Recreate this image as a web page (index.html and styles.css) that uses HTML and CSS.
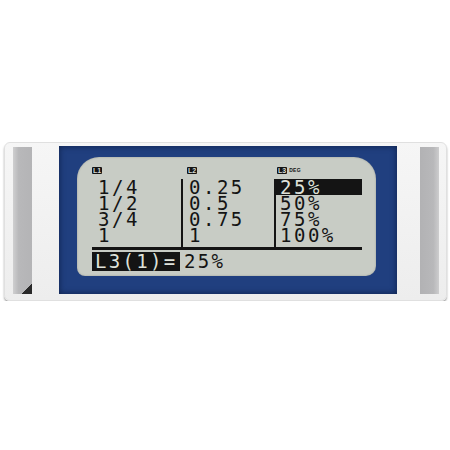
FILE: index.html
```html
<!DOCTYPE html>
<html>
<head>
<meta charset="utf-8">
<link rel="stylesheet" href="styles.css">
</head>
<body>
<div class="page">
  <div class="frame">
    <div class="bar bar-left"></div>
    <div class="panel">
      <div class="lcd">
        <div class="table">
          <div class="col c1">
            <div class="head"><span class="tag">L1</span></div>
            <div class="cells">
              <div class="cell">1/4</div>
              <div class="cell">1/2</div>
              <div class="cell">3/4</div>
              <div class="cell">1</div>
            </div>
          </div>
          <div class="col c2">
            <div class="head"><span class="tag">L2</span></div>
            <div class="cells">
              <div class="cell">0.25</div>
              <div class="cell">0.5</div>
              <div class="cell">0.75</div>
              <div class="cell">1</div>
            </div>
          </div>
          <div class="col c3">
            <div class="head"><span class="tag">L3</span><span class="deg">DEG</span></div>
            <div class="cells">
              <div class="cell sel">25%</div>
              <div class="cell">50%</div>
              <div class="cell">75%</div>
              <div class="cell">100%</div>
            </div>
          </div>
        </div>
        <div class="entry"><span class="prompt">L3(1)=</span><span class="value">25%</span></div>
      </div>
    </div>
    <div class="bar bar-right"></div>
  </div>
</div>
</body>
</html>
```

FILE: styles.css
```css
html, body {
  margin: 0;
  padding: 0;
  background: #ffffff;
}
.page {
  padding: 142px 3px 0 4px;
}
.frame {
  width: 443px;
  height: 159px;
  box-sizing: border-box;
  padding: 5px 9px 6px 8px;
  display: flex;
  align-items: flex-end;
  background: linear-gradient(to bottom, #f6f6f6, #ededed);
  border: 1px solid #e0e0e0;
  border-radius: 6px;
  box-shadow: 0 2px 2px rgba(0, 0, 0, 0.35);
}
.bar {
  width: 19px;
  height: 147px;
  flex: none;
}
.bar-left {
  background:
    linear-gradient(to bottom right, transparent 50%, #2a2a2a 52%) right bottom / 11px 11px no-repeat,
    linear-gradient(to right, #cfcfd0, #b8b8ba 30%, #b4b4b6);
}
.bar-right {
  background: linear-gradient(to right, #b2b2b4, #b8b8ba 70%, #cdcdce);
}
.panel {
  width: 338px;
  height: 148px;
  flex: none;
  margin: 0 23px 0 27px;
  box-sizing: border-box;
  padding: 11px 21px 18px 18px;
  background: #203f7f;
  box-shadow: inset 0 0 6px rgba(10, 25, 60, 0.8);
}
.lcd {
  height: 119px;
  box-sizing: border-box;
  padding: 10px 14px 5px 15px;
  background: #c8ccc5;
  border-radius: 22px 22px 10px 8px;
  box-shadow: inset 0 0 2px rgba(0, 0, 0, 0.25);
  color: #141414;
  font-family: "DejaVu Sans Mono", "Liberation Mono", monospace;
  font-size: 19px;
  letter-spacing: 2.5px;
}
.table {
  display: grid;
  grid-template-columns: 89px 93px 88px;
  border-bottom: 3px solid #141414;
}
.head {
  height: 7px;
  margin-bottom: 5px;
  display: flex;
  align-items: center;
  gap: 2px;
}
.tag {
  display: inline-block;
  height: 7px;
  padding: 0 1px;
  background: #141414;
  color: #d8dcd4;
  border-radius: 1px;
  font-family: "Liberation Sans", Arial, sans-serif;
  font-weight: bold;
  font-size: 7px;
  line-height: 7px;
  letter-spacing: 0;
}
.deg {
  font-family: "Liberation Sans", Arial, sans-serif;
  font-weight: bold;
  font-size: 5px;
  line-height: 6px;
  letter-spacing: 0.3px;
  margin-top: -1px;
}
.cells {
  padding-bottom: 4px;
}
.cell {
  height: 16px;
  line-height: 17px;
  white-space: nowrap;
}
.c1 .cells {
  padding-left: 6px;
}
.c2 .head {
  padding-left: 6px;
}
.c2 .cells {
  border-left: 2px solid #141414;
  padding-left: 6px;
}
.c3 .head {
  padding-left: 3px;
}
.c3 .cells {
  border-left: 2px solid #141414;
}
.c3 .cell {
  padding-left: 4px;
}
.c3 .cell.sel {
  background: #141414;
  color: #dfe2da;
}
.entry {
  margin-top: 2px;
  height: 19px;
  display: flex;
  gap: 4px;
  font-size: 19px;
  line-height: 19px;
}
.prompt {
  width: 88px;
  flex: none;
  box-sizing: border-box;
  padding-left: 3px;
  background: #141414;
  color: #dfe2da;
  letter-spacing: 2.3px;
  white-space: nowrap;
}
.value {
  letter-spacing: 2.3px;
}
```
